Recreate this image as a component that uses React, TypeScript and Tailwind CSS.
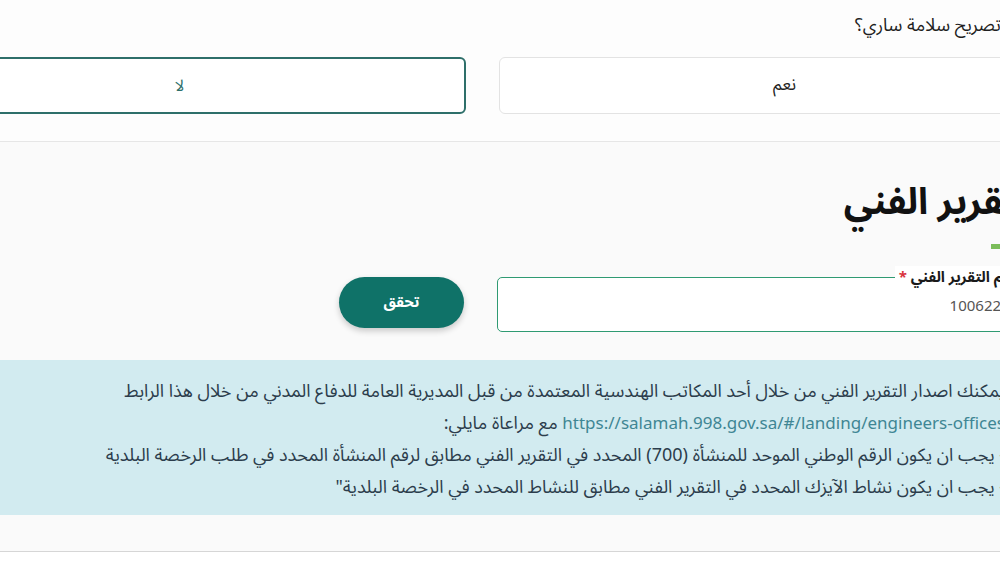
import React, { useState } from 'react';

const arabic = "font-['Noto_Sans_Arabic','DejaVu_Sans','Noto_Sans',sans-serif]";

const App: React.FC = () => {
  const [hasPermit, setHasPermit] = useState<'yes' | 'no'>('no');
  const [reportNo, setReportNo] = useState('10062271234');

  return (
    <div className="w-[1000px] h-[579px] overflow-hidden bg-white">
      <div dir="rtl" className={`w-[1177px] -ml-[107px] ${arabic}`}>
        {/* Safety permit question */}
        <div className="h-[142px] bg-[#fdfdfd] border-b border-[#e6e6e6] pt-[11px]">
          <p className="text-[18px] leading-[28px] text-[#1f1f1f]">هل لديك تصريح سلامة ساري؟</p>
          <div className="mt-[18px] flex gap-[33px]">
            <button
              onClick={() => setHasPermit('yes')}
              className={`h-[57px] flex-1 rounded-[6px] bg-white text-[17px] text-[#1f1f1f] ${
                hasPermit === 'yes' ? 'border-2 border-[#2e6f6a]' : 'border border-[#e3e3e3]'
              }`}
            >
              نعم
            </button>
            <button
              onClick={() => setHasPermit('no')}
              className={`h-[57px] flex-1 rounded-[6px] bg-white text-[16px] text-[#2e6f6a] ${
                hasPermit === 'no' ? 'border-2 border-[#2e6f6a]' : 'border border-[#e3e3e3]'
              }`}
            >
              لا
            </button>
          </div>
        </div>

        {/* Technical report */}
        <div className="bg-[#fafafa] border-b border-[#d6d6d6]">
          <div className="pt-[32px]">
            <h2 className="pr-[31px] text-[37px] leading-[56px] font-bold text-[#111]">التقرير الفني</h2>
            <div className="mt-[14px] h-[5px] w-[79px] bg-[#7bbd5a]" />
          </div>

          <div className="mt-[28px] flex gap-[33px] items-start">
            <div className="relative h-[55px] flex-1 rounded-[5px] border border-[#2f9a72] bg-white">
              <label className="absolute -top-[12px] right-[48px] px-[4px] bg-white text-[15px] leading-[22px] font-bold text-[#1a1a1a]">
                رقم التقرير الفني <span className="text-[#d9333f]">*</span>
              </label>
              <input
                dir="rtl"
                value={reportNo}
                onChange={(e) => setReportNo(e.target.value)}
                className="w-full h-full bg-transparent pr-[25px] pl-[14px] pt-[1px] text-[15px] text-[#555] outline-none font-['Noto_Sans',sans-serif]"
              />
            </div>
            <div className="flex-1">
              <button className="h-[51px] w-[125px] rounded-full bg-[#0f7268] text-white text-[15px] font-bold shadow-[0_3px_6px_rgba(0,0,0,0.2)]">
                تحقق
              </button>
            </div>
          </div>

          <div className="mt-[28px] bg-[#d2ebf0] pt-[15px] pb-[12px] pr-[65px] text-[18px] leading-[32px] text-[#2c3d4c]">
            <p>
              يمكنك اصدار التقرير الفني من خلال أحد المكاتب الهندسية المعتمدة من قبل المديرية العامة للدفاع المدني من خلال هذا الرابط
            </p>
            <p>
              <span dir="ltr" className="text-[#3f8694] font-['Noto_Sans',sans-serif] text-[17px]">https://salamah.998.gov.sa/#/landing/engineers-offices</span>{' '}
              مع مراعاة مايلي:
            </p>
            <p>- يجب ان يكون الرقم الوطني الموحد للمنشأة (700) المحدد في التقرير الفني مطابق لرقم المنشأة المحدد في طلب الرخصة البلدية</p>
            <p>- يجب ان يكون نشاط الآيزك المحدد في التقرير الفني مطابق للنشاط المحدد في الرخصة البلدية"</p>
          </div>

          <div className="h-[36px]" />
        </div>
      </div>
    </div>
  );
};

export default App;
